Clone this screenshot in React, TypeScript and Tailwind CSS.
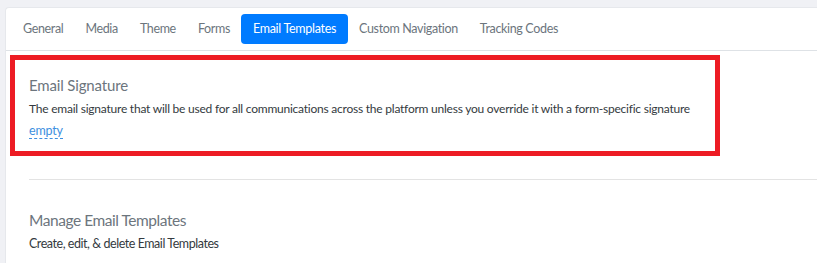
const tabs = ["General", "Media", "Theme", "Forms", "Email Templates", "Custom Navigation", "Tracking Codes"];

const App = () => {
    const active = "Email Templates";

    return (
        <div className="h-[263px] overflow-hidden bg-[#f0f1f5] pt-[7px] pl-[5px] font-['Lato',sans-serif]">
            <div className="h-full bg-white rounded-tl-[4px] border-l border-t border-[#e6e8ec]">
                <nav className="flex items-center pt-[6px] pb-[6px] pl-[6px] border-b border-[#dee2e6]">
                    {tabs.map((tab) => (
                        <button
                            key={tab}
                            className={
                                tab === active
                                    ? "h-[30px] px-[12px] rounded-[4px] bg-[#007bff] text-white text-[12.5px] tracking-[-0.3px]"
                                    : "h-[30px] px-[11px] rounded-[4px] text-[#6c757d] text-[12.5px] tracking-[-0.35px]"
                            }
                        >
                            {tab}
                        </button>
                    ))}
                </nav>

                <div className="pt-[4px] pl-[4px]">
                    <section className="w-[710px] h-[101px] border-[5px] border-[#ed1c24] px-[14px] pt-[15px]">
                        <h3 className="text-[15px] leading-[20px] tracking-[-0.15px] text-[#6c757d]">Email Signature</h3>
                        <p className="mt-[5px] whitespace-nowrap text-[12px] leading-[17px] tracking-[-0.23px] text-[#343a40]">
                            The email signature that will be used for all communications across the platform unless you override it with a form-specific signature
                        </p>
                        <a className="text-[12.5px] leading-[16px] tracking-[-0.2px] text-[#3d8fe0] border-b border-dashed border-[#3d8fe0]">
                            empty
                        </a>
                    </section>
                </div>

                <div className="pl-[23px]">
                    <hr className="mt-[23px] border-t border-[#e3e3e3]" />
                    <h3 className="mt-[30px] text-[15.5px] leading-[20px] tracking-[-0.45px] text-[#6c757d]">Manage Email Templates</h3>
                    <p className="mt-[5px] text-[12.5px] leading-[17px] tracking-[-0.45px] text-[#343a40]">Create, edit, &amp; delete Email Templates</p>
                </div>
            </div>
        </div>
    );
};

export default App;
